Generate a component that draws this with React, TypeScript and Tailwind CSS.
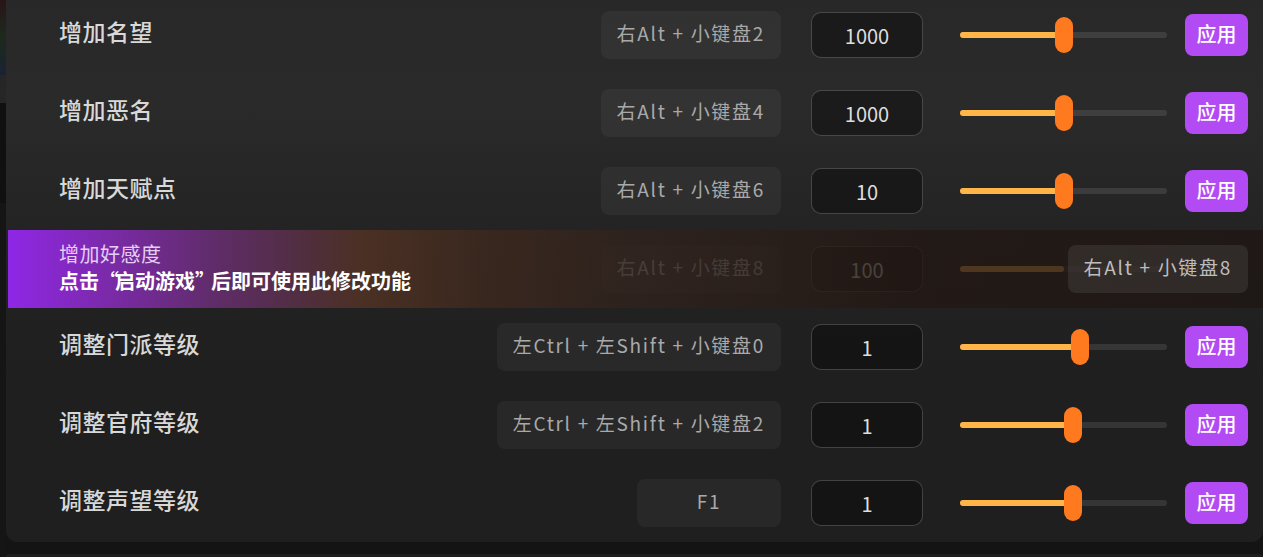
import React from "react";

type Row = {
  label: string;
  keys: string;
  value: string;
  thumb: number; // thumb center offset in px from track start
};

const rowsTop: Row[] = [
  { label: "增加名望", keys: "右Alt + 小键盘2", value: "1000", thumb: 104 },
  { label: "增加恶名", keys: "右Alt + 小键盘4", value: "1000", thumb: 104 },
  { label: "增加天赋点", keys: "右Alt + 小键盘6", value: "10", thumb: 104 },
];

const rowsBottom: Row[] = [
  { label: "调整门派等级", keys: "左Ctrl + 左Shift + 小键盘0", value: "1", thumb: 120 },
  { label: "调整官府等级", keys: "左Ctrl + 左Shift + 小键盘2", value: "1", thumb: 113 },
  { label: "调整声望等级", keys: "F1", value: "1", thumb: 113 },
];

function Slider({ thumb, showThumb = true }: { thumb: number; showThumb?: boolean }) {
  return (
    <div className="relative ml-[37px] flex h-[36px] w-[207px] items-center">
      <div className="h-[6px] w-full rounded-full bg-white/10" />
      <div
        className="absolute left-0 h-[6px] rounded-full bg-[#ffb547]"
        style={{ width: thumb }}
      />
      {showThumb && (
        <div
          className="absolute top-0 h-[36px] w-[18px] rounded-full bg-[#ff7a1f]"
          style={{ left: thumb - 9 }}
        />
      )}
    </div>
  );
}

function Controls({ row, faded = false }: { row: Row; faded?: boolean }) {
  return (
    <>
      <div className="flex h-[48px] min-w-[144px] items-center justify-center rounded-lg bg-white/[0.045] px-[16px] pb-[3px] text-[19px] tracking-[1.7px] text-[#a9a9a9]">
        {row.keys}
      </div>
      <div className="ml-[30px] flex h-[46px] w-[112px] items-center justify-center rounded-[10px] border-[1.5px] border-white/20 bg-black/[0.35] pt-[2px] text-[20px] text-[#dedede]">
        {row.value}
      </div>
      <Slider thumb={row.thumb} showThumb={!faded} />
      {faded ? (
        <div className="ml-[18px] h-[42px] w-[63px]" />
      ) : (
        <button className="ml-[18px] flex h-[42px] w-[63px] items-center justify-center rounded-lg bg-[#b24bf3] pb-[2px] text-[20px] font-medium text-white">
          应用
        </button>
      )}
    </>
  );
}

function SettingRow({ row }: { row: Row }) {
  return (
    <div className="flex h-[78px] items-center pl-[53px] pr-[15px]">
      <div className="flex-1 pb-[8px] text-[23px] font-medium tracking-[0.5px] text-[#d8d8d8]">
        {row.label}
      </div>
      <Controls row={row} />
    </div>
  );
}

export default function App() {
  const favor: Row = { label: "增加好感度", keys: "右Alt + 小键盘8", value: "100", thumb: 104 };
  return (
    <div className="flex h-[557px] w-[1263px] overflow-hidden bg-[#141414] font-['Noto_Sans_CJK_SC','Noto_Sans',sans-serif]">
      <div className="flex w-[6px] shrink-0 flex-col">
        <div className="h-[75px] bg-[linear-gradient(180deg,#2a1418,#1c2a1c_50%,#1a2233)]" />
        <div className="h-[28px] bg-[#262626]" />
        <div className="h-[100px] bg-[#101010]" />
        <div className="flex-1 bg-[#151515]" />
      </div>
      <div className="flex flex-1 flex-col">
        <div className="-mt-[4px] flex flex-col rounded-b-xl bg-[linear-gradient(180deg,#282828_0%,#2a2a2a_20%,#232323_45%,#1f1f1f_70%,#1f1f1f_100%)]">
          {rowsTop.map((r) => (
            <SettingRow key={r.label} row={r} />
          ))}
          <div className="relative flex h-[78px] items-center pl-[53px] pr-[15px]">
            <div className="flex-1" />
            <Controls row={favor} faded />
            <div className="absolute inset-y-0 left-[2px] -right-[1px] flex flex-col justify-center bg-[linear-gradient(90deg,#8f27e6_0%,#7b2aa9_8%,#612c6c_16%,#512e42_23%,#4b3024_28%,rgba(60,40,30,0.86)_38%,rgba(48,34,28,0.8)_50%,rgba(35,24,20,0.8)_72%,rgba(30,22,19,0.8)_100%)] pb-[5px] pl-[51px]">
              <div className="text-[20px] leading-[27px] tracking-[0.5px] text-[#e4cef5]">增加好感度</div>
              <div className="text-[20px] font-bold leading-[27px] text-white">
                点击<span className="tracking-[-4px]">“</span>启动游戏<span className="tracking-[-4px]">”</span>后即可使用此修改功能
              </div>
            </div>
            <div className="absolute right-[15px] top-[15px] flex h-[48px] items-center rounded-lg bg-white/[0.08] px-[16px] pb-[3px] text-[19px] tracking-[1.7px] text-[#bdbdbd]">
              右Alt + 小键盘8
            </div>
          </div>
          {rowsBottom.map((r) => (
            <SettingRow key={r.label} row={r} />
          ))}
        </div>
        <div className="mt-[12px] h-[40px] rounded-t-xl bg-[#1e1e1e]" />
      </div>
    </div>
  );
}
